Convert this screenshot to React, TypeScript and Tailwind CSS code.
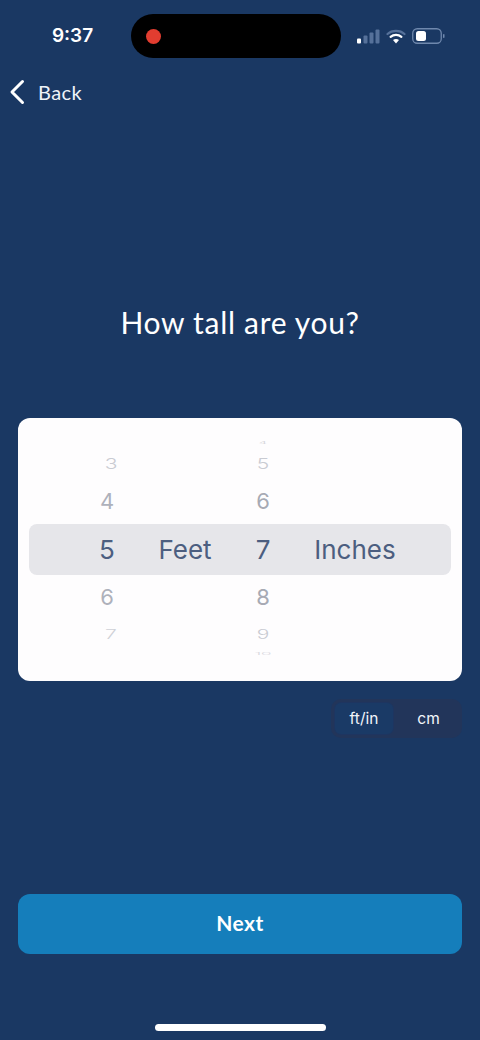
import React from 'react';

const inter = { fontFamily: 'Inter, sans-serif' };

function SignalIcon() {
  return (
    <svg width="23" height="15" viewBox="0 0 23 15">
      <rect x="0" y="9.5" width="4" height="5" rx="1" fill="#ffffff" />
      <rect x="6.5" y="6.5" width="4" height="8" rx="1" fill="#56719a" />
      <rect x="12.5" y="3.5" width="4" height="11" rx="1" fill="#56719a" />
      <rect x="18.5" y="0.5" width="4" height="14" rx="1" fill="#56719a" />
    </svg>
  );
}

function WifiIcon() {
  return (
    <svg width="20" height="15" viewBox="0 0 20 15" fill="none" strokeLinecap="round">
      <path d="M1.5 5 C6 0.8 14 0.8 18.5 5" stroke="#56719a" strokeWidth="2.2" />
      <path d="M4.6 7.8 C7.6 5.2 12.4 5.2 15.4 7.8" stroke="#ffffff" strokeWidth="2.2" />
      <path d="M10 14.6 L7 11 C8.6 9.7 11.4 9.7 13 11 Z" fill="#ffffff" />
    </svg>
  );
}

function BatteryIcon() {
  return (
    <svg width="33" height="16" viewBox="0 0 33 16" fill="none">
      <rect x="0.75" y="0.75" width="28.5" height="14.5" rx="4.5" stroke="#6f88ad" strokeWidth="1.3" />
      <rect x="4" y="3" width="10" height="10" rx="2.5" fill="#ffffff" />
      <rect x="31" y="6" width="1.5" height="4" rx="0.75" fill="#6f88ad" />
    </svg>
  );
}

function BackChevron() {
  return (
    <svg width="16" height="26" viewBox="0 0 16 26" fill="none">
      <polyline points="13.5,2.5 3,13 13.5,23.5" stroke="#ffffff" strokeWidth="3" strokeLinecap="round" strokeLinejoin="round" />
    </svg>
  );
}

function WheelCell({ children, className }: { children?: React.ReactNode; className: string }) {
  return <div className={`flex items-center justify-center ${className}`}>{children}</div>;
}

export default function App() {
  return (
    <div className="relative h-[1040px] w-[480px] overflow-hidden bg-[#1a3863]" style={{ fontFamily: 'Lato, sans-serif' }}>
      {/* status bar */}
      <div className="flex h-[72px] items-center">
        <div className="w-[131px] pl-[14px] text-center text-[19px] font-semibold text-white" style={inter}>9:37</div>
        <div className="flex h-[44px] w-[210px] items-center rounded-full bg-black pl-[15px]">
          <div className="h-[15px] w-[15px] rounded-full bg-[#e23d30]" />
        </div>
        <div className="ml-[16px] flex items-center gap-[6px]">
          <SignalIcon />
          <WifiIcon />
          <BatteryIcon />
        </div>
      </div>

      {/* back */}
      <div className="flex h-[40px] items-center pl-[9px] text-[#eef3f9]">
        <BackChevron />
        <span className="ml-[13px] text-[20px] tracking-[0.4px]">Back</span>
      </div>

      <h1 className="mt-[188px] text-center text-[30px] leading-[44px] tracking-[0.7px] text-white">How tall are you?</h1>

      {/* picker */}
      <div className="mx-[18px] mt-[74px] h-[263px] rounded-[12px] bg-[#fefdfe] px-[11px] pt-[18px]" style={inter}>
        <div className="flex h-[14px] pl-[220px] text-[12px] text-[#d6d6dc]">
          <WheelCell className="w-[28px] scale-y-[0.25]">4</WheelCell>
        </div>
        <div className="flex h-[28px]">
          <WheelCell className="ml-[68px] w-[28px] scale-y-[0.7] text-[21px] font-light text-[#c9cbd2]">3</WheelCell>
          <WheelCell className="ml-[124px] w-[28px] scale-y-[0.7] text-[21px] font-light text-[#c9cbd2]">5</WheelCell>
        </div>
        <div className="flex h-[46px]">
          <WheelCell className="ml-[64px] w-[28px] text-[22px] text-[#aeb1bb]">4</WheelCell>
          <WheelCell className="ml-[128px] w-[28px] text-[22px] text-[#a7aab4]">6</WheelCell>
        </div>
        <div className="flex h-[51px] items-center rounded-[8px] bg-[#e6e6ea] text-[26px] text-[#4c5e80]">
          <WheelCell className="ml-[64px] w-[28px]">5</WheelCell>
          <WheelCell className="ml-[25px] w-[78px]">Feet</WheelCell>
          <WheelCell className="ml-[25px] w-[28px]">7</WheelCell>
          <WheelCell className="ml-[23px] w-[110px]">Inches</WheelCell>
        </div>
        <div className="flex h-[45px]">
          <WheelCell className="ml-[64px] w-[28px] text-[22px] text-[#aeb1bb]">6</WheelCell>
          <WheelCell className="ml-[128px] w-[28px] text-[22px] text-[#a7aab4]">8</WheelCell>
        </div>
        <div className="flex h-[29px]">
          <WheelCell className="ml-[68px] w-[28px] scale-y-[0.65] text-[21px] font-light text-[#cfd1d7]">7</WheelCell>
          <WheelCell className="ml-[124px] w-[28px] scale-y-[0.65] text-[21px] font-light text-[#c9cbd2]">9</WheelCell>
        </div>
        <div className="flex h-[10px] pl-[220px] text-[17px] font-light text-[#d9d9df]">
          <WheelCell className="w-[28px] scale-y-[0.2]">10</WheelCell>
        </div>
      </div>

      {/* unit toggle */}
      <div className="mt-[18px] flex justify-end pr-[18px]" style={inter}>
        <div className="flex h-[39px] w-[131px] items-center rounded-[10px] bg-[#22355a] p-[3px] text-[15.5px] text-[#f2f5fa]">
          <div className="flex h-[33px] w-[60px] items-center justify-center rounded-[7px] border border-[#1e3560] bg-[#1a3a66]">ft/in</div>
          <div className="flex h-[33px] flex-1 items-center justify-center pl-[4px]">cm</div>
        </div>
      </div>

      <button className="mx-[18px] mt-[156px] flex h-[60px] w-[444px] items-center justify-center rounded-[12px] bg-[#157ebb] pb-[2px] text-[21px] font-bold tracking-[0.4px] text-white">
        Next
      </button>

      <div className="mx-auto mt-[70px] h-[7px] w-[171px] rounded-full bg-white" />
    </div>
  );
}
